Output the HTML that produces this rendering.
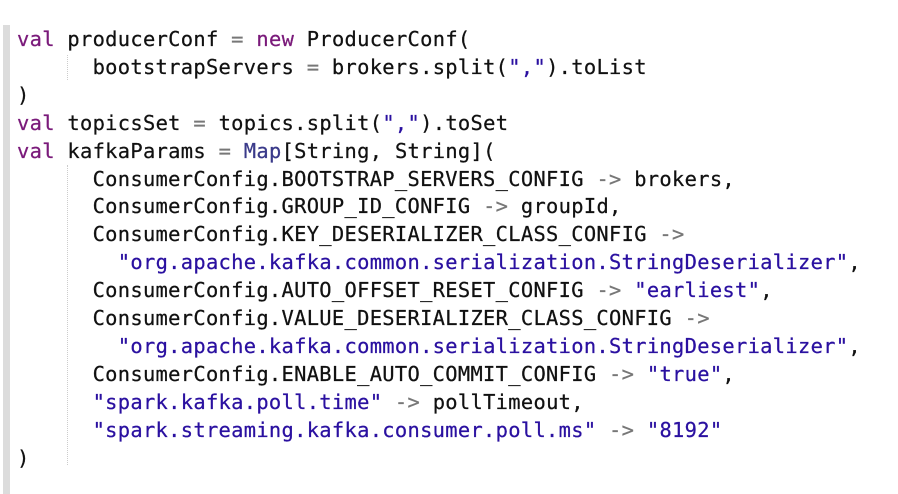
<!DOCTYPE html>
<html><head><style>
body{margin:0;width:898px;height:494px;background:#fff;overflow:hidden;position:relative}
.bar{position:absolute;left:3px;top:25px;width:7px;height:469px;background:#dcdcdc}
.guide{position:absolute;left:67px;border-left:1px dotted #ccc}
pre{position:absolute;left:17px;top:26px;margin:0;font-family:"DejaVu Sans Mono","Liberation Mono",monospace;font-size:20.4px;line-height:27.9px;color:#111;letter-spacing:0.32px;-webkit-text-stroke:0.25px currentColor}
.k{color:#7a1a7a}.s{color:#2a10a0}.o{color:#777}.t{color:#3a3a8a}
</style></head><body>
<div class="bar"></div>
<div class="guide" style="top:55px;height:25px"></div>
<div class="guide" style="top:165px;height:300px"></div>
<pre><span class="k">val</span> producerConf <span class="o">=</span> <span class="k">new</span> ProducerConf(
      bootstrapServers <span class="o">=</span> brokers.split(<span class="s">","</span>).toList
)
<span class="k">val</span> topicsSet <span class="o">=</span> topics.split(<span class="s">","</span>).toSet
<span class="k">val</span> kafkaParams <span class="o">=</span> <span class="t">Map</span>[String, String](
      ConsumerConfig.BOOTSTRAP_SERVERS_CONFIG <span class="o">-&gt;</span> brokers,
      ConsumerConfig.GROUP_ID_CONFIG <span class="o">-&gt;</span> groupId,
      ConsumerConfig.KEY_DESERIALIZER_CLASS_CONFIG <span class="o">-&gt;</span>
        <span class="s">"org.apache.kafka.common.serialization.StringDeserializer"</span>,
      ConsumerConfig.AUTO_OFFSET_RESET_CONFIG <span class="o">-&gt;</span> <span class="s">"earliest"</span>,
      ConsumerConfig.VALUE_DESERIALIZER_CLASS_CONFIG <span class="o">-&gt;</span>
        <span class="s">"org.apache.kafka.common.serialization.StringDeserializer"</span>,
      ConsumerConfig.ENABLE_AUTO_COMMIT_CONFIG <span class="o">-&gt;</span> <span class="s">"true"</span>,
      <span class="s">"spark.kafka.poll.time"</span> <span class="o">-&gt;</span> pollTimeout,
      <span class="s">"spark.streaming.kafka.consumer.poll.ms"</span> <span class="o">-&gt;</span> <span class="s">"8192"</span>
)</pre>
</body></html>
